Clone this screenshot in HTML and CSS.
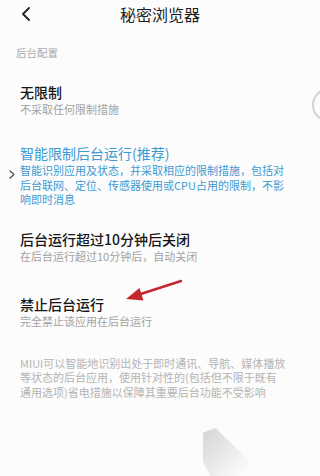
FILE: index.html
```html
<!DOCTYPE html>
<html lang="zh-CN">
<head>
<meta charset="utf-8">
<link rel="stylesheet" href="styles.css">
</head>
<body>
<div class="page">
  <header class="topbar">
    <svg class="back" width="10" height="14" viewBox="0 0 10 14"><path d="M8 1 L2 7 L8 13" fill="none" stroke="#222" stroke-width="1.8" stroke-linecap="round" stroke-linejoin="round"/></svg>
    <div class="title">秘密浏览器</div>
  </header>
  <div class="label">后台配置</div>
  <div class="items">
    <div class="item">
      <div class="item-title">无限制</div>
      <div class="item-desc">不采取任何限制措施</div>
    </div>
    <div class="item item-active">
      <svg class="marker" width="6" height="9" viewBox="0 0 6 9"><path d="M1 1 L5 4.5 L1 8" fill="none" stroke="#444" stroke-width="1.2" stroke-linecap="round" stroke-linejoin="round"/></svg>
      <div class="item-title">智能限制后台运行(推荐)</div>
      <div class="item-desc">智能识别应用及状态，并采取相应的限制措施，包括对<br>后台联网、定位、传感器使用或CPU占用的限制，不影<br>响即时消息</div>
    </div>
    <div class="item item-timed">
      <div class="item-title">后台运行超过10分钟后关闭</div>
      <div class="item-desc">在后台运行超过10分钟后，自动关闭</div>
    </div>
    <div class="item">
      <div class="item-title">禁止后台运行</div>
      <div class="item-desc">完全禁止该应用在后台运行</div>
    </div>
  </div>
  <p class="note">MIUI可以智能地识别出处于即时通讯、导航、媒体播放<br>等状态的后台应用，使用针对性的(包括但不限于既有<br>通用选项)省电措施以保障其重要后台功能不受影响</p>
  <div class="radio-edge"></div>
  <svg class="arrow" width="320" height="476" viewBox="0 0 320 476">
    <line x1="181" y1="281" x2="136" y2="295.5" stroke="#c3262c" stroke-width="2.4" stroke-linecap="round"/>
    <polygon points="126,299 139.5,288 143.5,300.5" fill="#c3262c"/>
  </svg>
  <div class="curl"></div>
</div>
</body>
</html>
```
FILE: styles.css
```css
html, body {
  margin: 0;
  padding: 0;
  background: #fcfcfc;
}
body {
  width: 320px;
  height: 476px;
  overflow: hidden;
  font-family: "Noto Sans CJK SC", "Noto Sans", sans-serif;
}
.page {
  position: relative;
  width: 320px;
  height: 476px;
  overflow: hidden;
}
.topbar {
  position: relative;
  height: 28px;
  display: flex;
  align-items: center;
  justify-content: center;
}
.back {
  position: absolute;
  left: 21px;
  top: 7px;
}
.title {
  font-size: 16px;
  line-height: 28px;
  color: #1e1e1e;
}
.label {
  margin: 18px 0 0 16px;
  font-size: 10.5px;
  line-height: 14px;
  color: #a8a8a8;
}
.items {
  display: flex;
  flex-direction: column;
  gap: 28px;
  margin-top: 23px;
  padding-left: 20px;
}
.item {
  position: relative;
}
.item-title {
  font-size: 14px;
  line-height: 18px;
  color: #161616;
  font-weight: 500;
}
.item-desc {
  margin-top: 1px;
  font-size: 11px;
  line-height: 14px;
  color: #a2a2a2;
}
.item-active {
  margin-bottom: -5px;
}
.item-timed {
  margin-bottom: 4px;
}
.item-active .item-title {
  color: #3e9ad2;
  font-weight: 400;
}
.item-active .item-desc {
  margin-top: 1px;
  line-height: 14.5px;
  color: #3e9ad2;
}
.marker {
  position: absolute;
  left: -11px;
  top: 26px;
}
.note {
  margin: 28px 0 0 20px;
  font-size: 11px;
  line-height: 14.5px;
  color: #b4b4b4;
}
.radio-edge {
  position: absolute;
  left: 312px;
  top: 88px;
  width: 30px;
  height: 30px;
  border: 2px solid #d2d2d2;
  border-radius: 50%;
}
.arrow {
  position: absolute;
  left: 0;
  top: 0;
}
.curl {
  position: absolute;
  left: 203px;
  top: 428px;
  width: 62px;
  height: 48px;
  background: linear-gradient(135deg, #d4d4d4 0%, #e8e8e8 40%, rgba(252,252,252,0) 80%);
  clip-path: polygon(0 10%, 20% 0, 100% 100%, 12% 100%, 0 70%);
}
```
